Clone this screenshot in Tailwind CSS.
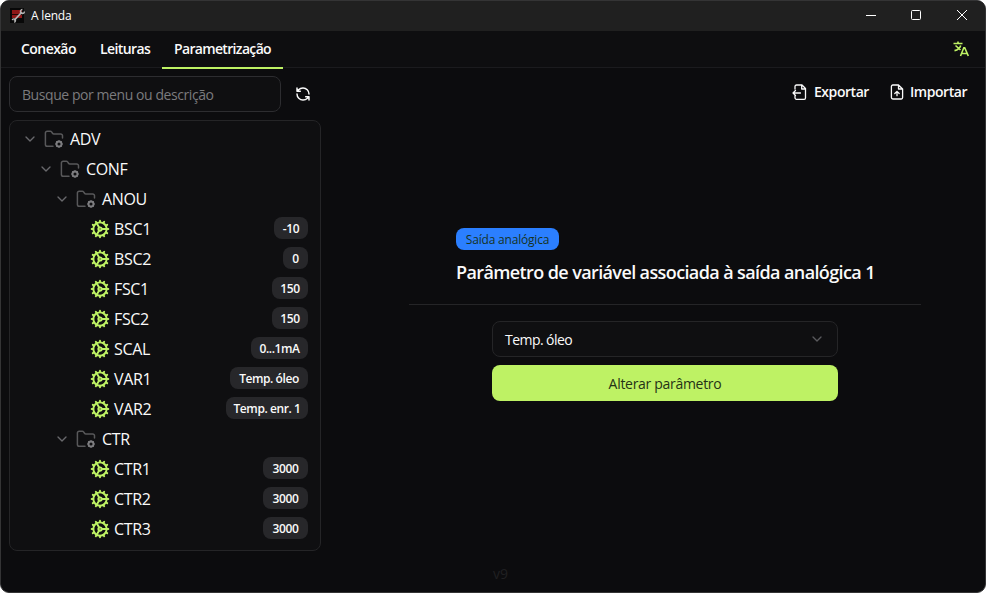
<!DOCTYPE html>
<html lang="pt-BR">
<head>
<meta charset="utf-8">
<title>A lenda</title>
<script src="https://cdn.jsdelivr.net/npm/@tailwindcss/browser@4"></script>
</head>
<body class="bg-white font-['Open_Sans','Noto_Sans',sans-serif] text-[#fafafa]">
<svg class="hidden">
  <symbol id="chev" viewBox="0 0 24 24" fill="none" stroke="currentColor" stroke-width="2" stroke-linecap="round" stroke-linejoin="round"><path d="m6 9 6 6 6-6"/></symbol>
  <symbol id="folder" viewBox="0 0 20 20" fill="none" stroke="currentColor" stroke-width="1.500" stroke-linecap="round" stroke-linejoin="round"><path d="M9 17.200H3.200a1.800 1.800 0 0 1-1.800-1.800V4a1.800 1.800 0 0 1 1.800-1.800h3.100a1.600 1.600 0 0 1 1.300.7l.9 1.300a1.600 1.600 0 0 0 1.300.7H16.700a1.800 1.800 0 0 1 1.800 1.800V9"/><g stroke="#7d7d80"><circle cx="15" cy="15" r="2.500" stroke-width="1.900"/><path stroke-width="1" d="M15 11.400v.7M15 17.900v.7M11.400 15h.6M18 15h.6M12.500 12.500l.4.4M17.100 17.100l.4.4M17.500 12.500l-.4.4M12.900 17.100l-.4.4"/></g></symbol>
  <symbol id="gear" viewBox="0 0 24 24" fill="none" stroke="currentColor" stroke-width="2.300" stroke-linecap="round"><circle cx="12" cy="12" r="8"/><circle cx="12" cy="12" r="2"/><path d="M12 2v2M12 20v2M2 12h2M20 12h2M14 12h6M17 3.340l-1 1.730M8 18.930l-1 1.730M20.660 7l-1.730 1M5.070 16l-1.730 1M20.660 17l-1.730-1M5.070 8 3.340 7M17 20.660l-1-1.730M8 5.070 7 3.340M11 10.270 8 5.070M11 13.730l-3 5.200"/></symbol>
</svg>
<div class="flex h-[593px] w-[986px] flex-col overflow-hidden rounded-[9px] border border-[#343435] bg-[#0c0c0e]">
  <header class="flex h-[30px] shrink-0 items-center bg-[#202020] pl-[9px] text-white">
    <svg class="h-[16px] w-[16px]" viewBox="0 0 16 16"><path fill="#080808" d="M0 0h14v15H0z"/><path fill="#8d1717" d="M2 2h10v8H2z"/><path stroke="#210606" d="M2 6.500h10"/><path d="m4 12.500 8-8.500" stroke="#b5b5b5" stroke-width="1.800"/><path d="M14.400 3.500a2 2 0 1 1-2-2M2.200 12.200a1.700 1.700 0 1 1 1.800 2" fill="none" stroke="#b5b5b5" stroke-width="1.300"/></svg>
    <span class="ml-[5px] text-[12px] tracking-[-0.2px]">A lenda</span>
    <svg class="mb-[2px] ml-auto mr-[15px] h-[14px] w-[106px]" viewBox="0 0 106 14" fill="none" stroke="#fff"><path d="M2 7.500h10"/><rect x="47.500" y="2.500" width="9" height="9" rx="1"/><path d="m93 2 10 10m0-10L93 12"/></svg>
  </header>
  <nav class="flex h-[37px] shrink-0 border-b border-[#1b1b1e] bg-[#0e0e10] pl-2 text-[14px] font-semibold">
    <div class="w-[79px] pl-3 pt-[8px] leading-5"><span class="tracking-[-0.550px]">Conexão</span></div>
    <div class="w-[74px] pl-3 pt-[8px] leading-5"><span class="tracking-[-0.600px]">Leituras</span></div>
    <div class="h-[38px] w-[121px] border-b-2 border-[#bef264] pl-3 pt-[8px] leading-5"><span class="tracking-[-0.660px]">Parametrização</span></div>
    <svg class="ml-auto mr-[16px] mt-[10px] h-4 w-4 text-[#bef264]" viewBox="0 0 16 16" fill="none" stroke="currentColor" stroke-width="1.600"><path d="M.5 2.500h9M5 .5v2M2.500 4.500l5 4.500M7.700 4.500C6.800 7.500 4.500 9 1.500 9.600M7.500 15l3.300-8.300h.9L15.300 15M8.700 12.500h5.400"/></svg>
  </nav>
  <main class="flex h-[483px] shrink-0 pl-2 pt-2">
    <aside class="flex w-[312px] shrink-0 flex-col gap-2">
      <div class="flex gap-1">
        <div class="flex h-9 w-[272px] items-center rounded-lg border border-[#2d2d30] bg-[#0f0f11] px-3 text-[14px] text-[#7b7b7e]"><span class="tracking-[-0.430px]">Busque por menu ou descrição</span></div>
        <div class="flex h-9 w-9 items-center justify-center"><svg class="h-4 w-4" viewBox="0 0 24 24" fill="none" stroke="currentColor" stroke-width="2.200" stroke-linecap="round" stroke-linejoin="round"><path d="M21 12a9 9 0 0 0-9-9 9.750 9.750 0 0 0-6.740 2.740L3 8M3 3v5h5M3 12a9 9 0 0 0 9 9 9.750 9.750 0 0 0 6.740-2.740L21 16M16 16h5v5"/></svg></div>
      </div>
      <div id="tree" class="h-[431px] w-[312px] rounded-lg border border-[#252527] bg-[#0f0f11] py-[3px] pr-3"></div>
    </aside>
    <section class="flex min-w-0 flex-1 flex-col">
      <div class="flex h-8 items-center justify-end pr-[18px] text-[14px] font-semibold">
        <svg class="mr-[6px] h-4 w-4" viewBox="0 0 16 16" fill="none" stroke="currentColor" stroke-width="1.300" stroke-linecap="round" stroke-linejoin="round"><path d="M3 5V2.500a1.500 1.500 0 0 1 1.500-1.500H10l3.500 3.500v9.500a1.300 1.300 0 0 1-1.300 1.300H4.500A1.500 1.500 0 0 1 3 13.800V12M9.700 1v4h3.800M8.500 9H1M3.500 6.500 1 9l2.500 2.500"/></svg>
        <span class="-mt-px w-[54px] whitespace-nowrap tracking-[-0.450px]">Exportar</span>
        <svg class="ml-[21px] mr-[5px] h-4 w-4" viewBox="0 0 16 16" fill="none" stroke="currentColor" stroke-width="1.300" stroke-linecap="round" stroke-linejoin="round"><path d="M9.500 1H3.800A1.400 1.400 0 0 0 2.400 2.400v11.200A1.400 1.400 0 0 0 3.800 15h8.400a1.400 1.400 0 0 0 1.400-1.400V5zM9.500 1v4h4.100M8 11.700V7.500M5.800 9.500 8 7.400l2.200 2.100"/></svg>
        <span class="-mt-px w-[57px] whitespace-nowrap tracking-[-0.450px]">Importar</span>
      </div>
      <div class="ml-[88px] mt-[120px] flex w-[512px] flex-col">
        <div class="ml-[47px] flex h-[22px] w-[103px] items-center justify-center rounded-lg bg-[#2b7fff] pt-px text-[12px] font-medium text-[#17331d]"><span class="tracking-[-0.200px]">Saída analógica</span></div>
        <h1 class="ml-[47px] mt-[8px] whitespace-nowrap text-[18px] font-semibold leading-7 tracking-[-0.610px]">Parâmetro de variável associada à saída analógica 1</h1>
        <div class="mt-[18px] h-px bg-[#252527]"></div>
        <div class="ml-[83px] mt-4 flex h-9 w-[346px] items-center justify-between rounded-lg border border-[#252527] bg-[#0f0f11] pl-3 pr-3 text-[14px]"><span class="font-medium tracking-[-0.550px]">Temp. óleo</span><svg class="h-4 w-4 text-[#5a5a5d]"><use href="#chev"/></svg></div>
        <div class="ml-[83px] mt-2 flex h-9 w-[346px] items-center justify-center rounded-lg bg-[#bef264] text-[14px] font-medium text-[#253316]"><span class="tracking-[-0.300px]">Alterar parâmetro</span></div>
      </div>
    </section>
  </main>
  <footer class="flex flex-1 justify-center pt-[13px] text-[14px] leading-5 text-[#202022]"><span class="ml-[15px]">v9</span></footer>
</div>
<script>
const folders = {
  ADV: 'pl-[12px]', CONF: 'pl-[28px]', ANOU: 'pl-[44px]', CTR: 'pl-[44px]'
};
const rows = [['ADV'],['CONF'],['ANOU'],['BSC1','-10',34],['BSC2','0',25],['FSC1','150',36],['FSC2','150',36],['SCAL','0...1mA',57],['VAR1','Temp. óleo',78],['VAR2','Temp. enr. 1',82],['CTR'],['CTR1','3000',45],['CTR2','3000',45],['CTR3','3000',45]];
document.getElementById('tree').innerHTML = rows.map(([name, value, width]) => value === undefined
  ? `<div class="flex h-[30px] items-center ${folders[name]}"><svg class="h-4 w-4 text-[#69696c]"><use href="#chev"/></svg><svg class="ml-[6px] h-5 w-5 text-[#58585a]"><use href="#folder"/></svg><span class="ml-[6px] text-[16px] leading-6 tracking-[-0.350px]">${name}</span></div>`
  : `<div class="flex h-[30px] items-center pl-[80px]"><svg class="h-5 w-5 text-[#bef264]"><use href="#gear"/></svg><span class="ml-[4px] text-[16px] leading-6 tracking-[-0.350px]">${name}</span><div class="mb-[2px] ml-auto flex h-[22px] items-center justify-center rounded-lg bg-[#27272a] pt-[2px] text-[12px] font-semibold" style="width:${width}px"><span class="whitespace-nowrap tracking-[-0.420px]">${value}</span></div></div>`).join('');
</script>
</body>
</html>
